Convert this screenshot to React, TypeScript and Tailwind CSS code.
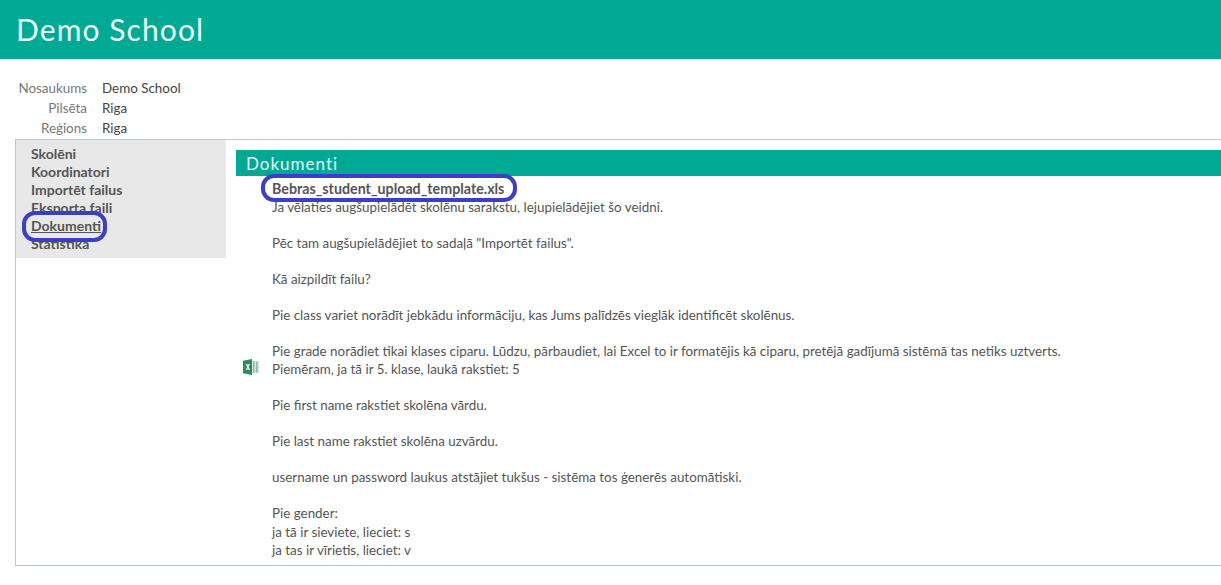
const navItems = ["Skolēni", "Koordinatori", "Importēt failus", "Eksporta faili", "Dokumenti", "Statistika"];

const infoRows = [
  ["Nosaukums", "Demo School"],
  ["Pilsēta", "Riga"],
  ["Reģions", "Riga"],
];

function ExcelIcon() {
  return (
    <svg width="16" height="16" viewBox="0 0 16 16" className="shrink-0">
      <rect x="6" y="2" width="10" height="12" fill="#d3e6db" />
      <rect x="10" y="2.5" width="1.5" height="11" fill="#8dbda2" />
      <rect x="13" y="2.5" width="1.5" height="11" fill="#8dbda2" />
      <path d="M0 1.8 L9 0 V16 L0 14.2 Z" fill="#2f8a62" />
      <path d="M2.8 5 H4.2 L4.9 6.6 L5.6 5 H6.9 L5.6 7.9 L7 11 H5.6 L4.9 9.3 L4.1 11 H2.8 L4.2 7.9 Z" fill="#ffffff" />
    </svg>
  );
}

export default function App() {
  return (
    <div className="min-h-[585px] bg-white font-['Lato',sans-serif] text-[13.4px] text-[#555]">
      <header className="flex h-[59px] items-center bg-[#00a993] pl-[16px]">
        <h1 className="text-[30px] tracking-[1.1px] text-[#eefaf7]">Demo School</h1>
      </header>

      <div className="pt-[19px] pb-[1px]">
        {infoRows.map(([label, value]) => (
          <div key={label} className="flex h-5 items-center">
            <span className="w-[87px] text-right text-[#777]">{label}</span>
            <span className="ml-[15px] text-[#444]">{value}</span>
          </div>
        ))}
      </div>

      <div className="ml-[15px] flex h-[427px] items-start border-t border-b border-l border-[#b5c7d3]">
        <nav className="relative flex w-[210px] shrink-0 flex-col bg-[#e8e8e8] pt-[5px] pb-[5px] pl-[15px]">
          {navItems.map((item) => (
            <a
              key={item}
              className={`h-[18px] text-[14px] leading-[18px] font-bold text-[#555] ${item === "Dokumenti" ? "underline" : ""}`}
            >
              {item}
            </a>
          ))}
          <div className="absolute top-[71px] left-[6px] h-[31px] w-[85px] rounded-[13px] border-[4px] border-[#3b3fc4]" />
        </nav>

        <main className="min-w-0 flex-1 pt-[10px] pl-[10px]">
          <h2 className="h-[26px] bg-[#00a993] pl-[10px] text-[17px] leading-[27px] tracking-[1px] text-[#eefaf7]">
            Dokumenti
          </h2>
          <div className="flex items-center">
            <div className="flex w-[36px] justify-center pr-[6px] pb-[2px]">
              <ExcelIcon />
            </div>
            <div className="relative">
              <div className="h-[22px] pt-[4px] text-[14.25px] leading-[18px] font-bold text-[#555]">Bebras_student_upload_template.xls</div>
              <div className="absolute top-[-2px] left-[-11px] h-[28px] w-[256px] rounded-[13px] border-[4px] border-[#3b3fc4]" />
              <div className="leading-[18px]">
                <p>Ja vēlaties augšupielādēt skolēnu sarakstu, lejupielādējiet šo veidni.</p>
                <p className="mt-[18px]">Pēc tam augšupielādējiet to sadaļā "Importēt failus".</p>
                <p className="mt-[18px]">Kā aizpildīt failu?</p>
                <p className="mt-[18px]">Pie class variet norādīt jebkādu informāciju, kas Jums palīdzēs vieglāk identificēt skolēnus.</p>
                <p className="mt-[18px]">Pie grade norādiet tikai klases ciparu. Lūdzu, pārbaudiet, lai Excel to ir formatējis kā ciparu, pretējā gadījumā sistēmā tas netiks uztverts.</p>
                <p>Piemēram, ja tā ir 5. klase, laukā rakstiet: 5</p>
                <p className="mt-[18px]">Pie first name rakstiet skolēna vārdu.</p>
                <p className="mt-[18px]">Pie last name rakstiet skolēna uzvārdu.</p>
                <p className="mt-[18px]">username un password laukus atstājiet tukšus - sistēma tos ģenerēs automātiski.</p>
                <p className="mt-[18px]">Pie gender:</p>
                <p className="mt-[1px]">ja tā ir sieviete, lieciet: s</p>
                <p>ja tas ir vīrietis, lieciet: v</p>
              </div>
            </div>
          </div>
        </main>
      </div>
    </div>
  );
}
